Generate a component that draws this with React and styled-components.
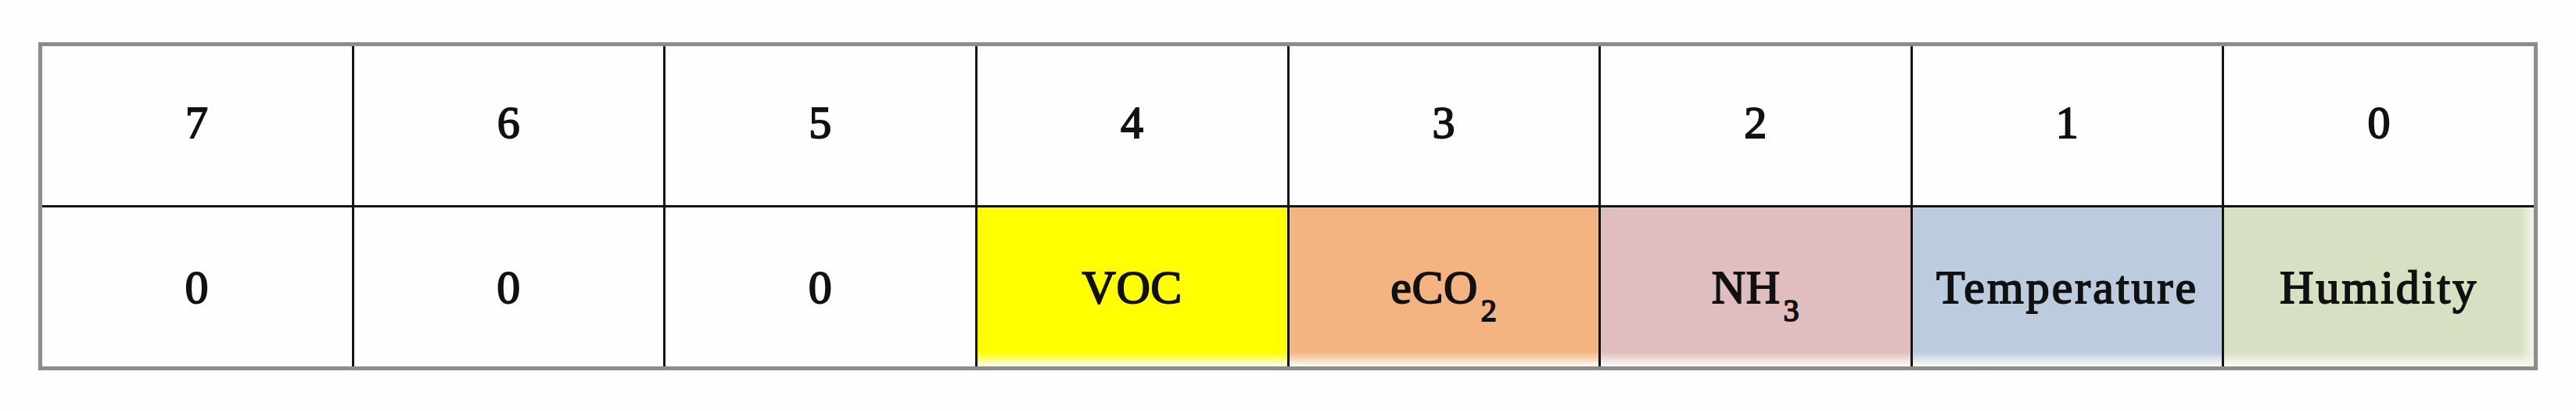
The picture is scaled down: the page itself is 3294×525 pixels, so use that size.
import React from "react";
import styled, { createGlobalStyle } from "styled-components";

const GlobalStyle = createGlobalStyle`
  html, body {
    margin: 0;
    padding: 0;
    background: #fefefe;
  }
  body {
    font-family: "Liberation Serif", "Times New Roman", serif;
    color: #111;
  }
`;

const bits = [7, 6, 5, 4, 3, 2, 1, 0];

const values = [
  { label: "0" },
  { label: "0" },
  { label: "0" },
  { label: "VOC", color: "#ffff00" },
  { label: "eCO", sub: "2", color: "#f4b482" },
  { label: "NH", sub: "3", color: "#e0bec0" },
  { label: "Temperature", color: "#bdcbdf", wide: true },
  { label: "Humidity", color: "#d6e0c3", wide: true, edge: true },
];

export default function App() {
  return (
    <Page>
      <GlobalStyle />
      <Table>
        {bits.map((b) => (
          <Cell key={"h" + b} $head>
            {b}
          </Cell>
        ))}
        {values.map((v, i) => (
          <Cell key={"v" + i} $color={v.color} $wide={v.wide} $edge={v.edge}>
            {v.label}
            {v.sub && <Sub>{v.sub}</Sub>}
          </Cell>
        ))}
      </Table>
    </Page>
  );
}

const Page = styled.div`
  padding: 54px 0 0 49px;
`;

const Table = styled.div`
  width: 3196px;
  box-sizing: border-box;
  display: grid;
  grid-template-columns: repeat(8, 1fr);
  grid-template-rows: 203px 203px;
  gap: 3px;
  background: #141414;
  border: 5px solid #8c8c8c;
  box-shadow: 0 0 1px #aaa;
`;

const Cell = styled.div`
  display: flex;
  align-items: center;
  justify-content: center;
  background: ${(p) =>
    p.$color
      ? `linear-gradient(to bottom, ${p.$color} calc(100% - 18px), #fdfdf8 100%)`
      : "#fefefe"};
  ${(p) =>
    p.$edge &&
    `box-shadow: inset -18px 0 14px -10px #f4f6ee;`}
  font-size: ${(p) => (p.$head ? "58px" : "60px")};
  font-weight: 400;
  -webkit-text-stroke: 1.8px #111;
  line-height: 1;
  letter-spacing: ${(p) => (p.$wide ? "3px" : "0.5px")};
  padding-bottom: ${(p) => (p.$head ? "8px" : "0")};
  white-space: nowrap;
`;

const Sub = styled.span`
  font-size: 40px;
  position: relative;
  top: 30px;
  margin-left: 4px;
`;
